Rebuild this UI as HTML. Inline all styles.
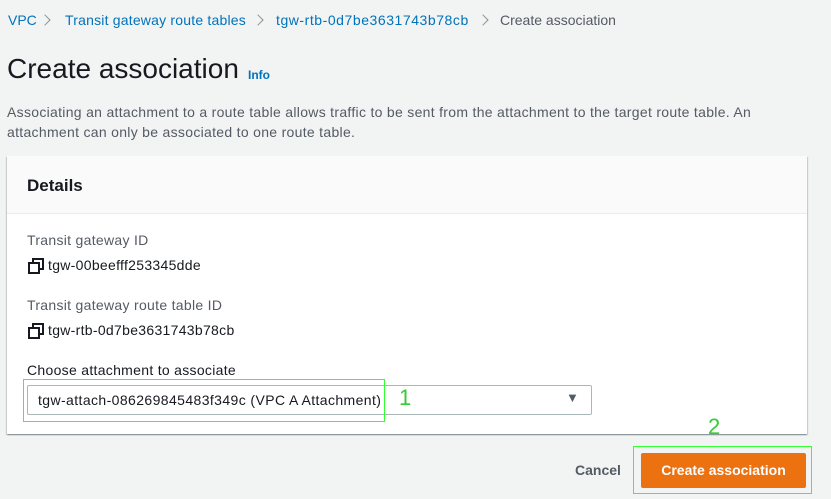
<!DOCTYPE html>
<html><head><style>
body{margin:0;width:831px;height:499px;background:#f2f3f3;font-family:"Liberation Sans",sans-serif;position:relative;overflow:hidden;color:#16191f}
.a{position:absolute;white-space:nowrap}
.lnk{color:#0073bb}
.chev{position:absolute;width:7px;height:7px;border-top:1.5px solid #879596;border-right:1.5px solid #879596;transform:rotate(45deg)}
.card{position:absolute;left:7px;top:156px;width:800px;height:278px;background:#fff;box-shadow:0 1px 1px rgba(0,28,36,.3),1px 1px 1px rgba(0,28,36,.15),-1px 1px 1px rgba(0,28,36,.15)}
.hd{position:absolute;left:0;top:0;width:800px;height:57px;background:#fafafa;border-bottom:1px solid #eaeded}
.cp{position:absolute;width:8px;height:8px;border:2px solid #16191f}
.ls{letter-spacing:0.3px}
</style></head><body>
<div class="a lnk" style="left:8px;top:12px;font-size:14px">VPC</div>
<div class="chev" style="left:41px;top:16px"></div>
<div class="a lnk ls" style="left:65px;top:12px;font-size:14px;letter-spacing:0.2px">Transit gateway route tables</div>
<div class="chev" style="left:254px;top:16px"></div>
<div class="a lnk ls" style="left:276px;top:12px;font-size:14px;letter-spacing:0.55px">tgw-rtb-0d7be3631743b78cb</div>
<div class="chev" style="left:479px;top:16px"></div>
<div class="a" style="left:500px;top:12px;font-size:14px;color:#545b64">Create association</div>
<div class="a" style="left:7px;top:53px;font-size:28px">Create association</div>
<div class="a lnk" style="left:248px;top:68px;font-size:12px;font-weight:bold">Info</div>
<div class="a" style="left:7px;top:102px;font-size:14px;color:#545b64;line-height:20px;letter-spacing:0.3px">Associating an attachment to a route table allows traffic to be sent from the attachment to the target route table. An<br>attachment can only be associated to one route table.</div>
<div class="card">
<div class="hd"></div>
<div class="a" style="left:20px;top:20px;font-size:17px;font-weight:bold">Details</div>
<div class="a ls" style="left:20px;top:76px;font-size:14px;color:#545b64">Transit gateway ID</div>
<div class="cp" style="left:25px;top:102px"></div><div class="cp" style="left:21px;top:106px;background:#fff"></div>
<div class="a ls" style="left:41px;top:101px;font-size:14px">tgw-00beefff253345dde</div>
<div class="a ls" style="left:20px;top:141px;font-size:14px;color:#545b64">Transit gateway route table ID</div>
<div class="cp" style="left:25px;top:167px"></div><div class="cp" style="left:21px;top:171px;background:#fff"></div>
<div class="a ls" style="left:41px;top:166px;font-size:14px">tgw-rtb-0d7be3631743b78cb</div>
<div class="a ls" style="left:20px;top:206px;font-size:14px">Choose attachment to associate</div>
<div style="position:absolute;left:20px;top:229px;width:563px;height:28px;border:1px solid #aab7b8;border-radius:2px"></div>
<div class="a" style="left:31px;top:236px;font-size:14px;letter-spacing:0.4px">tgw-attach-086269845483f349c (VPC A Attachment)</div>
<div class="a" style="left:559px;top:234px;font-size:13px;color:#545b64">▼</div>
</div>
<div style="position:absolute;left:23px;top:379px;width:360px;height:41px;border:1px solid #3f3"></div>
<div class="a" style="left:399px;top:385px;font-size:22px;color:#3c3">1</div>
<div class="a" style="left:708px;top:414px;font-size:22px;color:#3c3">2</div>
<div style="position:absolute;left:633px;top:446px;width:177px;height:46px;border:1px solid #3f3"></div>
<div class="a" style="left:575px;top:462px;font-size:14px;font-weight:bold;color:#545b64">Cancel</div>
<div style="position:absolute;left:641px;top:453px;width:165px;height:35px;background:#ec7211;border-radius:2px;color:#fff;font-size:14px;font-weight:bold;text-align:center;line-height:35px">Create association</div>
</body></html>
